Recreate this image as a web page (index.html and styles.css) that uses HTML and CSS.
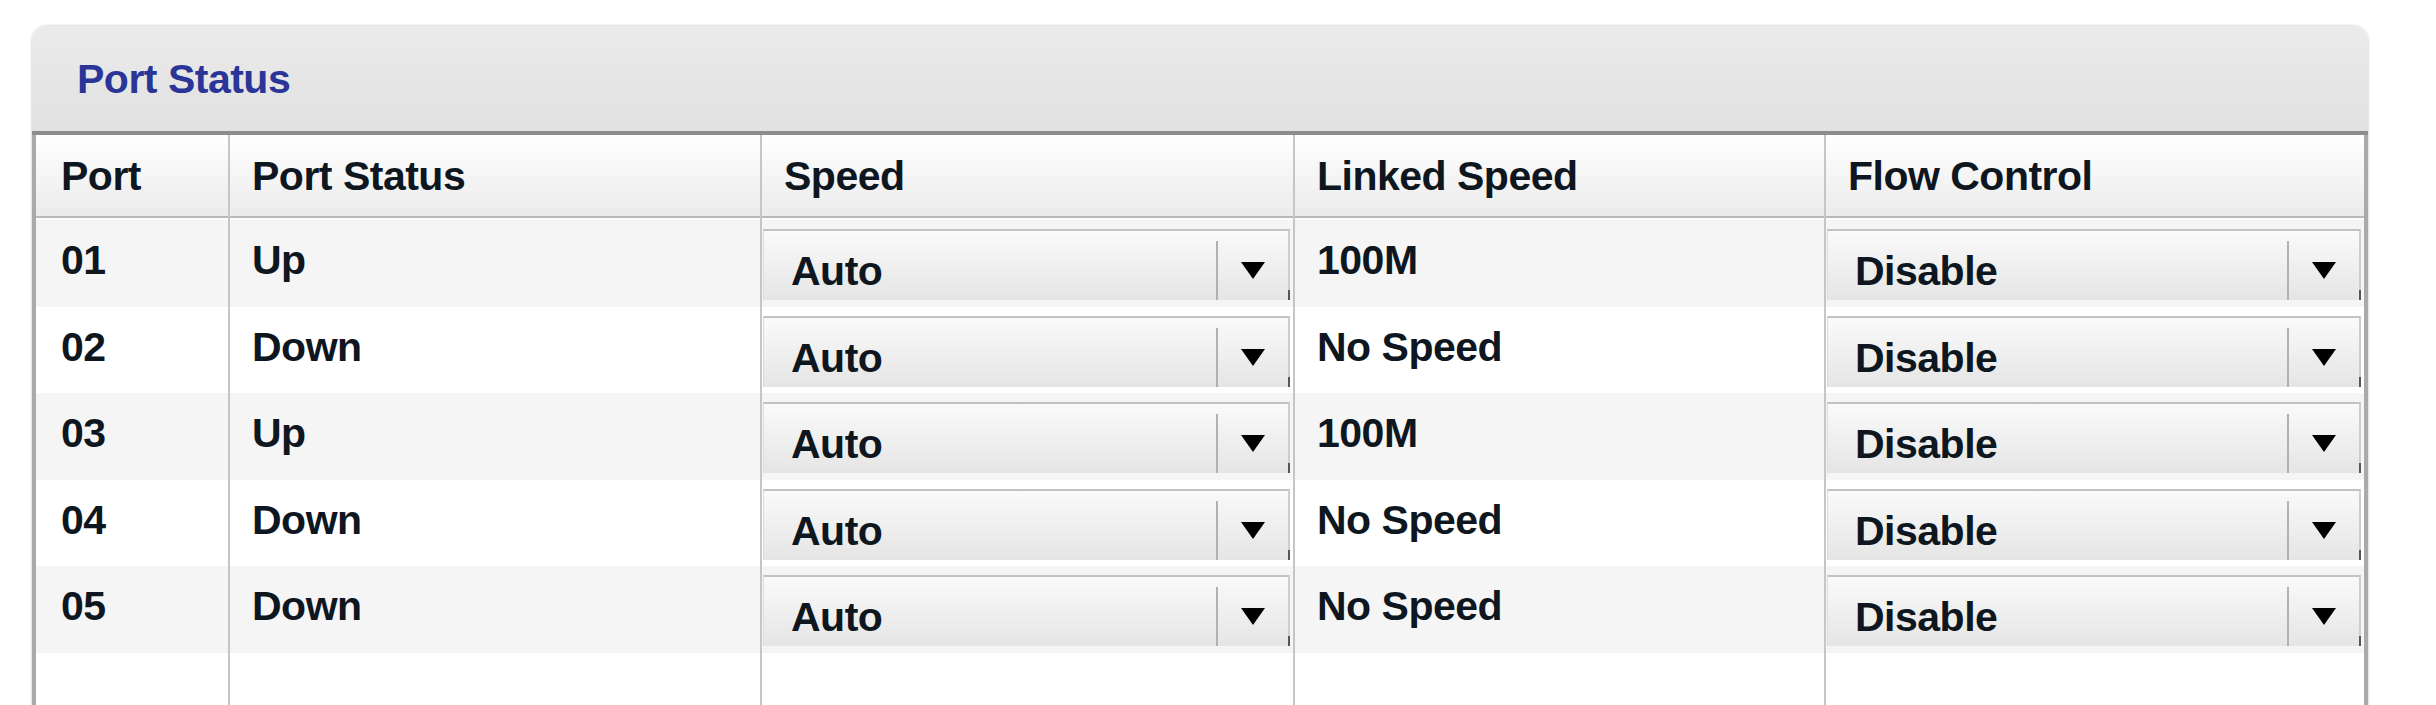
FILE: index.html
```html
<!DOCTYPE html>
<html lang="en">
    <head>
        <meta charset="UTF-8">
        <title>Port Status</title>
        <link rel="stylesheet" href="styles.css">
    </head>
    <body>
        <div class="page">
            <div class="panel">
                <div class="panel-title">Port Status</div>
                <div class="ports">
                    <div class="row head">
                        <div class="cell">Port</div>
                        <div class="cell">Port Status</div>
                        <div class="cell">Speed</div>
                        <div class="cell">Linked Speed</div>
                        <div class="cell">Flow Control</div>
                    </div>

                    <div class="row odd">
                        <div class="cell">01</div>
                        <div class="cell">Up</div>
                        <div class="cell pick">
                            <div class="select"><span class="select-value">Auto</span><span class="select-btn"><i class="arrow"></i></span></div>
                        </div>
                        <div class="cell">100M</div>
                        <div class="cell pick">
                            <div class="select"><span class="select-value">Disable</span><span class="select-btn"><i class="arrow"></i></span></div>
                        </div>
                    </div>

                    <div class="row">
                        <div class="cell">02</div>
                        <div class="cell">Down</div>
                        <div class="cell pick">
                            <div class="select"><span class="select-value">Auto</span><span class="select-btn"><i class="arrow"></i></span></div>
                        </div>
                        <div class="cell">No Speed</div>
                        <div class="cell pick">
                            <div class="select"><span class="select-value">Disable</span><span class="select-btn"><i class="arrow"></i></span></div>
                        </div>
                    </div>

                    <div class="row odd">
                        <div class="cell">03</div>
                        <div class="cell">Up</div>
                        <div class="cell pick">
                            <div class="select"><span class="select-value">Auto</span><span class="select-btn"><i class="arrow"></i></span></div>
                        </div>
                        <div class="cell">100M</div>
                        <div class="cell pick">
                            <div class="select"><span class="select-value">Disable</span><span class="select-btn"><i class="arrow"></i></span></div>
                        </div>
                    </div>

                    <div class="row">
                        <div class="cell">04</div>
                        <div class="cell">Down</div>
                        <div class="cell pick">
                            <div class="select"><span class="select-value">Auto</span><span class="select-btn"><i class="arrow"></i></span></div>
                        </div>
                        <div class="cell">No Speed</div>
                        <div class="cell pick">
                            <div class="select"><span class="select-value">Disable</span><span class="select-btn"><i class="arrow"></i></span></div>
                        </div>
                    </div>

                    <div class="row odd">
                        <div class="cell">05</div>
                        <div class="cell">Down</div>
                        <div class="cell pick">
                            <div class="select"><span class="select-value">Auto</span><span class="select-btn"><i class="arrow"></i></span></div>
                        </div>
                        <div class="cell">No Speed</div>
                        <div class="cell pick">
                            <div class="select"><span class="select-value">Disable</span><span class="select-btn"><i class="arrow"></i></span></div>
                        </div>
                    </div>

                    <!-- empty space under the last port -->
                    <div class="row filler">
                        <div class="cell"></div>
                        <div class="cell"></div>
                        <div class="cell"></div>
                        <div class="cell"></div>
                        <div class="cell"></div>
                    </div>
                </div>
            </div>
        </div>
    </body>
</html>
```

FILE: styles.css
```css
body {
    margin: 0;
    background: #fff;
    font-family: "Liberation Sans", Arial, sans-serif;
    font-weight: bold;
    font-size: 41px;
    line-height: 47px;
    letter-spacing: -0.5px;
    color: #0e1620;
}

.page {
    padding: 26px 0 0 32px;
}

.panel {
    width: 2336px;
    border-radius: 15px 15px 0 0;
    box-shadow: 0 0 3px rgba(0, 0, 0, 0.25);
}

/* Title bar */

.panel-title {
    height: 75px;
    padding: 30px 0 0 45px;
    color: #2a3597;
    background: linear-gradient(#ebebeb, #e1e1e1);
    border-radius: 15px 15px 0 0;
    border-bottom: 4px solid #8c8c8c;
}

/* Table */

.ports {
    border-left: 4px solid #aaa;
    border-right: 4px solid #aaa;
}

.row {
    display: grid;
    grid-template-columns: 192px 532px 533px 531px 540px;
    height: 86.6px;
}

.row.odd {
    background: #f5f5f5;
}

.cell {
    box-sizing: border-box;
    padding: 17px 0 0 22px;
    white-space: nowrap;
}

.cell:first-child {
    padding-left: 25px;
}

.cell + .cell {
    border-left: 2px solid #c6c6c6;
}

.head {
    height: 85px;
}

.head .cell {
    padding-top: 18px;
    background:
        linear-gradient(#fff, #ebebeb) 0 0 / 100% 81px no-repeat,
        linear-gradient(#b9b9b9, #b9b9b9) 0 81px / 100% 2px no-repeat;
}

.filler {
    height: 100px;
}

/* Drop-down boxes */

.cell.pick {
    padding: 9px 3px 0 1px;
}

.select {
    position: relative;
    display: flex;
    height: 69px;
    border-top: 2px solid #c2c2c2;
    border-left: 1px solid #dcdcdc;
    border-right: 2px solid #cdcdcd;
    background: linear-gradient(#fafafa, #e5e5e5);
}

.select::after {
    content: "";
    position: absolute;
    right: -2px;
    bottom: 0;
    width: 2px;
    height: 10px;
    background: #555;
}

.select-value {
    flex: 1;
    padding: 17px 0 0 27px;
}

.select-btn {
    display: flex;
    justify-content: center;
    align-items: center;
    width: 70px;
    margin-top: 10px;
    border-left: 2px solid #b1b1b1;
}

.arrow {
    width: 0;
    height: 0;
    border-left: 12px solid transparent;
    border-right: 12px solid transparent;
    border-top: 17px solid #000;
}
```
